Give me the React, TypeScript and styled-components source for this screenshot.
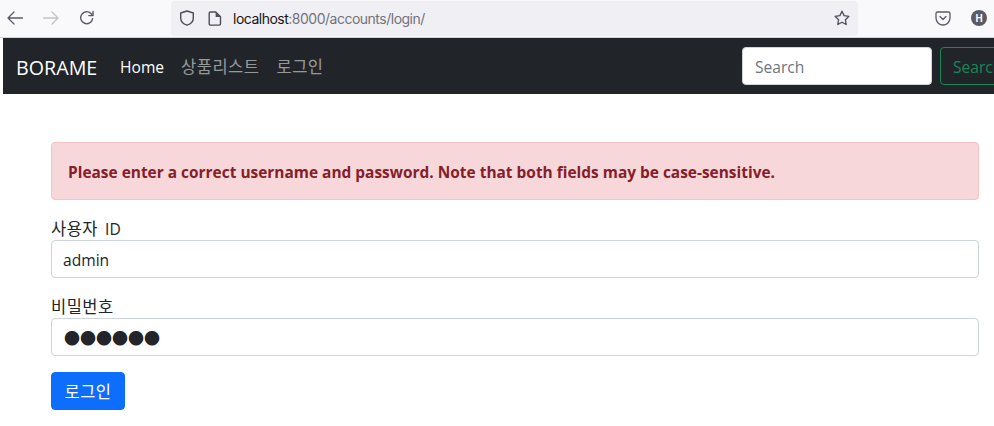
import styled, { createGlobalStyle } from 'styled-components';

const GlobalStyle = createGlobalStyle`
  html, body {
    margin: 0;
    padding: 0;
    width: 994px;
    height: 426px;
    overflow: hidden;
    background: #fff;
  }
  * {
    box-sizing: border-box;
  }
`;

const Page = styled.div`
  width: 994px;
  height: 426px;
  overflow: hidden;
  font-family: 'Open Sans', 'Noto Sans CJK KR', sans-serif;
  font-size: 15.6px;
  color: #212529;
`;

const BrowserBar = styled.div`
  display: flex;
  align-items: center;
  height: 38px;
  padding: 0 0 1px 7px;
  background: #f9f9fb;
  border-bottom: 1px solid #d4d4d8;
`;

const NavIcons = styled.div`
  display: flex;
  align-items: center;
  gap: 20px;
  width: 164px;
`;

const UrlBar = styled.div`
  display: flex;
  align-items: center;
  width: 687px;
  height: 35px;
  padding: 0 8px 0 8px;
  background: #f0f0f4;
  border-radius: 4px;
  font-family: 'Inter', 'Noto Sans', sans-serif;
  font-size: 14px;
  letter-spacing: -0.5px;
  color: #72727a;
`;

const UrlIcons = styled.div`
  display: flex;
  align-items: center;
  gap: 13px;
  margin-right: 11px;
  color: #5b5b66;
`;

const Host = styled.span`
  color: #15141a;
`;

const UrlText = styled.div`
  flex: 1;
`;

const BarEnd = styled.div`
  display: flex;
  align-items: center;
  gap: 20px;
  margin-left: 77px;
  color: #5b5b66;
`;

const Avatar = styled.div`
  display: flex;
  align-items: center;
  justify-content: center;
  width: 16px;
  height: 16px;
  border-radius: 50%;
  background: #5b5b66;
  color: #fff;
  font-family: 'Liberation Sans', sans-serif;
  font-size: 10px;
  font-weight: 700;
`;

const Navbar = styled.nav`
  display: flex;
  align-items: center;
  width: 1028px;
  height: 56px;
  margin-left: 3px;
  padding: 0 13px;
  background: #212529;
`;

const Brand = styled.a`
  width: 104px;
  padding-top: 2px;
  font-size: 19.7px;
  line-height: 27px;
  color: #fff;
`;

const NavLink = styled.a<{ $active?: boolean }>`
  margin-right: 17px;
  padding-top: 2px;
  line-height: 24px;
  color: ${p => (p.$active ? '#fff' : 'rgba(255, 255, 255, 0.55)')};
`;

const Hangul = styled.span`
  font-size: 16.5px;
  letter-spacing: 0.5px;
`;

const SearchForm = styled.form`
  display: flex;
  gap: 8px;
  margin-left: auto;
`;

const SearchInput = styled.input`
  width: 190px;
  height: 38px;
  padding: 2px 12px 0;
  border: 1px solid #ced4da;
  border-radius: 4px;
  background: #fff;
  font: inherit;
  &::placeholder {
    color: #6c757d;
    opacity: 1;
  }
`;

const SearchButton = styled.button`
  width: 78px;
  height: 38px;
  padding: 2px 12px 0;
  border: 1px solid #198754;
  border-radius: 4px;
  background: transparent;
  color: #198754;
  font: inherit;
  text-align: left;
`;

const Content = styled.main`
  display: flex;
  flex-direction: column;
  width: 928px;
  margin: 48px 0 0 51px;
`;

const Alert = styled.div`
  display: flex;
  align-items: center;
  height: 58px;
  margin-bottom: 16px;
  padding: 2px 16px 0;
  border: 1px solid #f5c2c7;
  border-radius: 4px;
  background: #f8d7da;
  color: #842029;
  font-size: 15.45px;
  font-weight: 700;
`;

const Field = styled.div`
  display: flex;
  flex-direction: column;
  margin-bottom: 16px;
`;

const Label = styled.label`
  height: 24px;
  line-height: 26px;
  word-spacing: 3px;
`;

const TextInput = styled.input`
  width: 100%;
  height: 38px;
  padding: 2px 11px 0;
  border: 1px solid #ced4da;
  border-radius: 4px;
  background: #fff;
  color: #212529;
  font: inherit;
`;

const MaskedInput = styled(TextInput)`
  padding: 0 12px;
  font-family: 'Noto Sans CJK KR', sans-serif;
  font-size: 16px;
`;

const SubmitButton = styled.button`
  width: 74px;
  height: 38px;
  padding: 0;
  border: 1px solid #0d6efd;
  border-radius: 4px;
  background: #0d6efd;
  color: #fff;
  font: inherit;
`;

const BackIcon = () => (
  <svg width="16" height="16" viewBox="0 0 16 16" fill="none" stroke="#5b5b66" strokeWidth="1.3" strokeLinecap="round" strokeLinejoin="round">
    <path d="M15.500 8H1M7 2 1 8l6 6" />
  </svg>
);

const ForwardIcon = () => (
  <svg width="16" height="16" viewBox="0 0 16 16" fill="none" stroke="#c2c2c8" strokeWidth="1.3" strokeLinecap="round" strokeLinejoin="round">
    <path d="M.5 8H15M9 2l6 6-6 6" />
  </svg>
);

const ReloadIcon = () => (
  <svg width="16" height="16" viewBox="0 0 16 16" fill="none" stroke="#5b5b66" strokeWidth="1.4" strokeLinecap="round" strokeLinejoin="round">
    <path d="M13.600 8.600A6 6 0 1 1 12 3.500l1.600 1.700" />
    <path d="M14 1.400v4.200H9.800" />
  </svg>
);

const ShieldIcon = () => (
  <svg width="16" height="16" viewBox="0 0 16 16" fill="none" stroke="#4d4d57" strokeWidth="1.4">
    <path d="M8 1 1.700 3v5c0 3.400 2.600 6 6.300 7.200 3.700-1.200 6.300-3.800 6.300-7.200V3z" strokeLinejoin="round" />
  </svg>
);

const PageIcon = () => (
  <svg width="14" height="15" viewBox="0 0 14 15" fill="none" stroke="#4d4d57" strokeWidth="1.4">
    <path d="M2.500 1h5.200L12.500 5.800v7a1.300 1.300 0 0 1-1.300 1.300H2.500a1.300 1.300 0 0 1-1.300-1.300V2.300A1.300 1.300 0 0 1 2.500 1z" strokeLinejoin="round" />
    <path d="M7.600 1.200v4.700h4.700z" fill="#4d4d57" stroke="none" />
  </svg>
);

const StarIcon = () => (
  <svg width="16" height="16" viewBox="0 0 16 16" fill="none" stroke="#4d4d57" strokeWidth="1.3" strokeLinejoin="round">
    <path d="m8 1.200 2.100 4.400 4.800.7-3.500 3.400.8 4.800L8 12.200l-4.200 2.300.8-4.800L1.100 6.300l4.800-.7z" />
  </svg>
);

const PocketIcon = () => (
  <svg width="16" height="16" viewBox="0 0 16 16" fill="none" stroke="#5b5b66" strokeWidth="1.3">
    <path d="M2.500 2h11A1.500 1.500 0 0 1 15 3.500V8a7 7 0 0 1-14 0V3.500A1.500 1.500 0 0 1 2.500 2z" />
    <path d="m5 6.500 3 3 3-3" strokeLinecap="round" strokeLinejoin="round" />
  </svg>
);

export default function App() {
  return (
    <Page>
      <GlobalStyle />
      <BrowserBar>
        <NavIcons>
          <BackIcon />
          <ForwardIcon />
          <ReloadIcon />
        </NavIcons>
        <UrlBar>
          <UrlIcons>
            <ShieldIcon />
            <PageIcon />
          </UrlIcons>
          <UrlText>
            <Host>localhost</Host>:8000/accounts/login/
          </UrlText>
          <StarIcon />
        </UrlBar>
        <BarEnd>
          <PocketIcon />
          <Avatar>H</Avatar>
        </BarEnd>
      </BrowserBar>
      <Navbar>
        <Brand>BORAME</Brand>
        <NavLink $active>Home</NavLink>
        <NavLink>
          <Hangul>상품리스트</Hangul>
        </NavLink>
        <NavLink>
          <Hangul>로그인</Hangul>
        </NavLink>
        <SearchForm>
          <SearchInput placeholder="Search" />
          <SearchButton type="button">Search</SearchButton>
        </SearchForm>
      </Navbar>
      <Content>
        <Alert>Please enter a correct username and password. Note that both fields may be case-sensitive.</Alert>
        <Field>
          <Label>
            <Hangul>사용자</Hangul> ID
          </Label>
          <TextInput defaultValue="admin" />
        </Field>
        <Field>
          <Label>
            <Hangul>비밀번호</Hangul>
          </Label>
          <MaskedInput defaultValue="●●●●●●" />
        </Field>
        <div>
          <SubmitButton type="button">
            <Hangul>로그인</Hangul>
          </SubmitButton>
        </div>
      </Content>
    </Page>
  );
}
